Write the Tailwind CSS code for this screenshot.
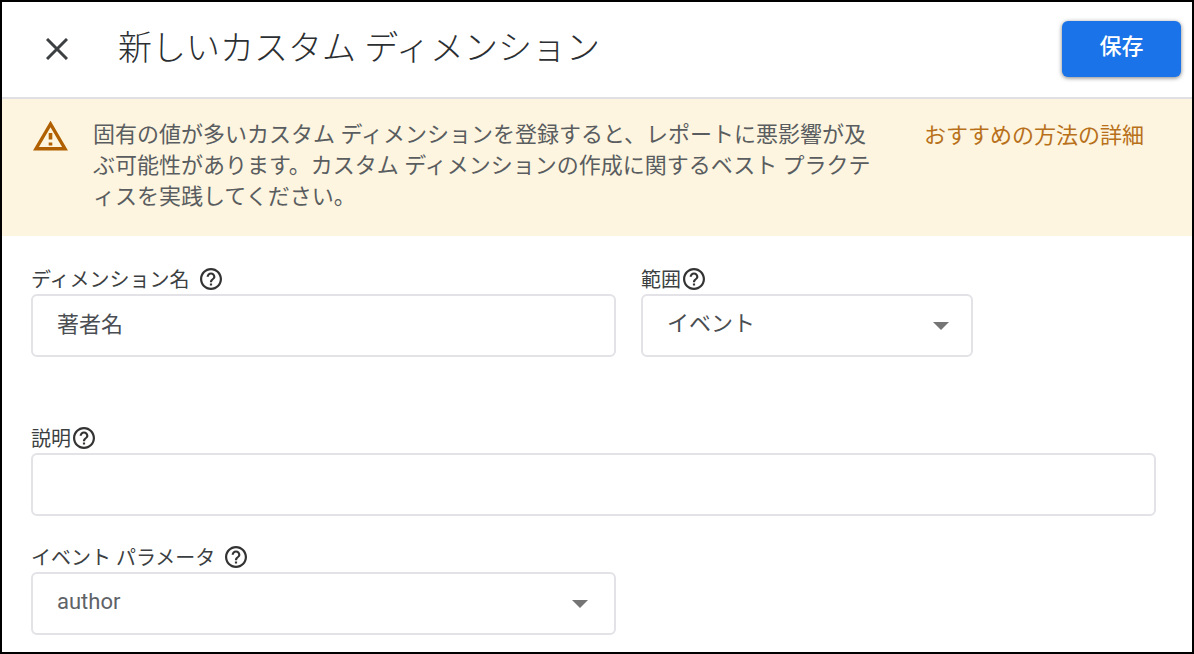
<!DOCTYPE html>
<html lang="ja">
<head>
<meta charset="utf-8">
<meta name="viewport" content="width=device-width, initial-scale=1">
<title>新しいカスタム ディメンション</title>
<script src="https://cdn.jsdelivr.net/npm/@tailwindcss/browser@4"></script>
</head>
<body class="min-h-screen border-2 border-black bg-white font-['Roboto','Noto_Sans_CJK_JP',sans-serif] text-[#4a4d51]">
<svg class="hidden" aria-hidden="true">
  <symbol id="help" viewBox="2 2 20 20"><path fill="currentColor" d="M11 16h2v2h-2zM12 2C6.480 2 2 6.480 2 12s4.480 10 10 10 10-4.480 10-10S17.520 2 12 2zm0 18c-4.410 0-8-3.590-8-8s3.590-8 8-8 8 3.590 8 8-3.590 8-8 8zm0-14c-2.210 0-4 1.790-4 4h2c0-1.100.9-2 2-2s2 .9 2 2c0 2-3 1.750-3 5h2c0-2.250 3-2.500 3-5 0-2.210-1.790-4-4-4z"/></symbol>
  <symbol id="arrow" viewBox="0 0 16 8"><path fill="#757575" d="M0 0h16L8 8z"/></symbol>
</svg>

<header class="flex h-[97px] items-center border-b-2 border-[#e0e0e4] pr-[11px] pb-[2px] pl-[43px]">
  <button type="button" aria-label="閉じる" class="flex size-6 items-center justify-center">
    <svg class="size-[22px]" viewBox="0 0 22 22" fill="none" stroke="#3c4043" stroke-width="3"><path d="M1 1l20 20M21 1L1 21"/></svg>
  </button>
  <h1 class="ml-[49px] flex-1 pb-[2px] text-[34px] leading-10 font-light text-[#2c2f32]">新しいカスタム ディメンション</h1>
  <button type="button" class="h-14 w-[119px] rounded-md bg-[#1a73e8] pb-1 text-[22px] font-medium text-white shadow-[0_1px_4px_rgba(0,0,0,0.5)]">保存</button>
</header>

<section class="flex items-start bg-[#fdf5df] pt-5 pr-12 pb-6 pl-[31px]">
  <svg class="mt-[2px] h-[30px] w-[35px] shrink-0" viewBox="0 0 35 30"><path fill="none" stroke="#b06000" stroke-width="3.400" d="M17.500 3L3 27.700h29z"/><path fill="#b06000" d="M15.700 12h3.600v6.500h-3.600zM15.700 21.600h3.600v2.800h-3.600z"/></svg>
  <p class="ml-[25px] flex-1 text-[22px] leading-[31px] text-[#5a5d5f]">固有の値が多いカスタム ディメンションを登録すると、レポートに悪影響が及ぶ可能性があります。カスタム ディメンションの作成に関するベスト プラクティスを実践してください。</p>
  <a href="#" class="ml-[36px] shrink-0 text-[22px] leading-[34px] text-[#b8701a]">おすすめの方法の詳細</a>
</section>

<form class="pt-[30px] pr-9 pb-4 pl-[29px]">
  <div class="flex gap-[25px]">
    <div class="w-[52%]">
      <div class="flex h-7 items-center gap-[10px] text-[20px] text-[#3c3f42]">
        <label for="name">ディメンション名</label>
        <svg class="mb-[2px] size-[22px] text-[#333]" role="img" aria-label="ヘルプ"><use href="#help"/></svg>
      </div>
      <input id="name" type="text" value="著者名" class="h-[63px] w-full rounded-md border-2 border-[#e2e2e7] px-6 pb-2 text-[22px]">
    </div>
    <div class="w-[29.5%]">
      <div class="flex h-7 items-center gap-[2px] text-[20px] text-[#3c3f42]">
        <label for="scope">範囲</label>
        <svg class="mb-[2px] size-[22px] text-[#333]" role="img" aria-label="ヘルプ"><use href="#help"/></svg>
      </div>
      <div class="grid items-center">
        <select id="scope" class="col-start-1 row-start-1 h-[63px] w-full appearance-none rounded-md border-2 border-[#e2e2e7] bg-white px-6 pb-1 text-[22px]"><option>イベント</option></select>
        <svg class="pointer-events-none col-start-1 row-start-1 mr-6 h-2 w-4 justify-self-end"><use href="#arrow"/></svg>
      </div>
    </div>
  </div>

  <div class="mt-[68px]">
    <div class="flex h-7 items-center gap-[2px] text-[20px] text-[#3c3f42]">
      <label for="desc">説明</label>
      <svg class="mb-[2px] size-[22px] text-[#333]" role="img" aria-label="ヘルプ"><use href="#help"/></svg>
    </div>
    <input id="desc" type="text" class="h-[63px] w-full rounded-md border-2 border-[#e2e2e7] px-6 pb-2 text-[22px]">
  </div>

  <div class="mt-7 w-[52%]">
    <div class="flex h-7 items-center gap-[10px] text-[20px] text-[#3c3f42]">
      <label for="param">イベント パラメータ</label>
      <svg class="mb-[2px] size-[22px] text-[#333]" role="img" aria-label="ヘルプ"><use href="#help"/></svg>
    </div>
    <div class="grid items-center">
      <select id="param" class="col-start-1 row-start-1 h-[63px] w-full appearance-none rounded-md border-2 border-[#e2e2e7] bg-white px-6 pb-1 text-[22px] text-[#5f6368]"><option>author</option></select>
      <svg class="pointer-events-none col-start-1 row-start-1 mr-7 h-2 w-4 justify-self-end"><use href="#arrow"/></svg>
    </div>
  </div>
</form>
</body>
</html>
